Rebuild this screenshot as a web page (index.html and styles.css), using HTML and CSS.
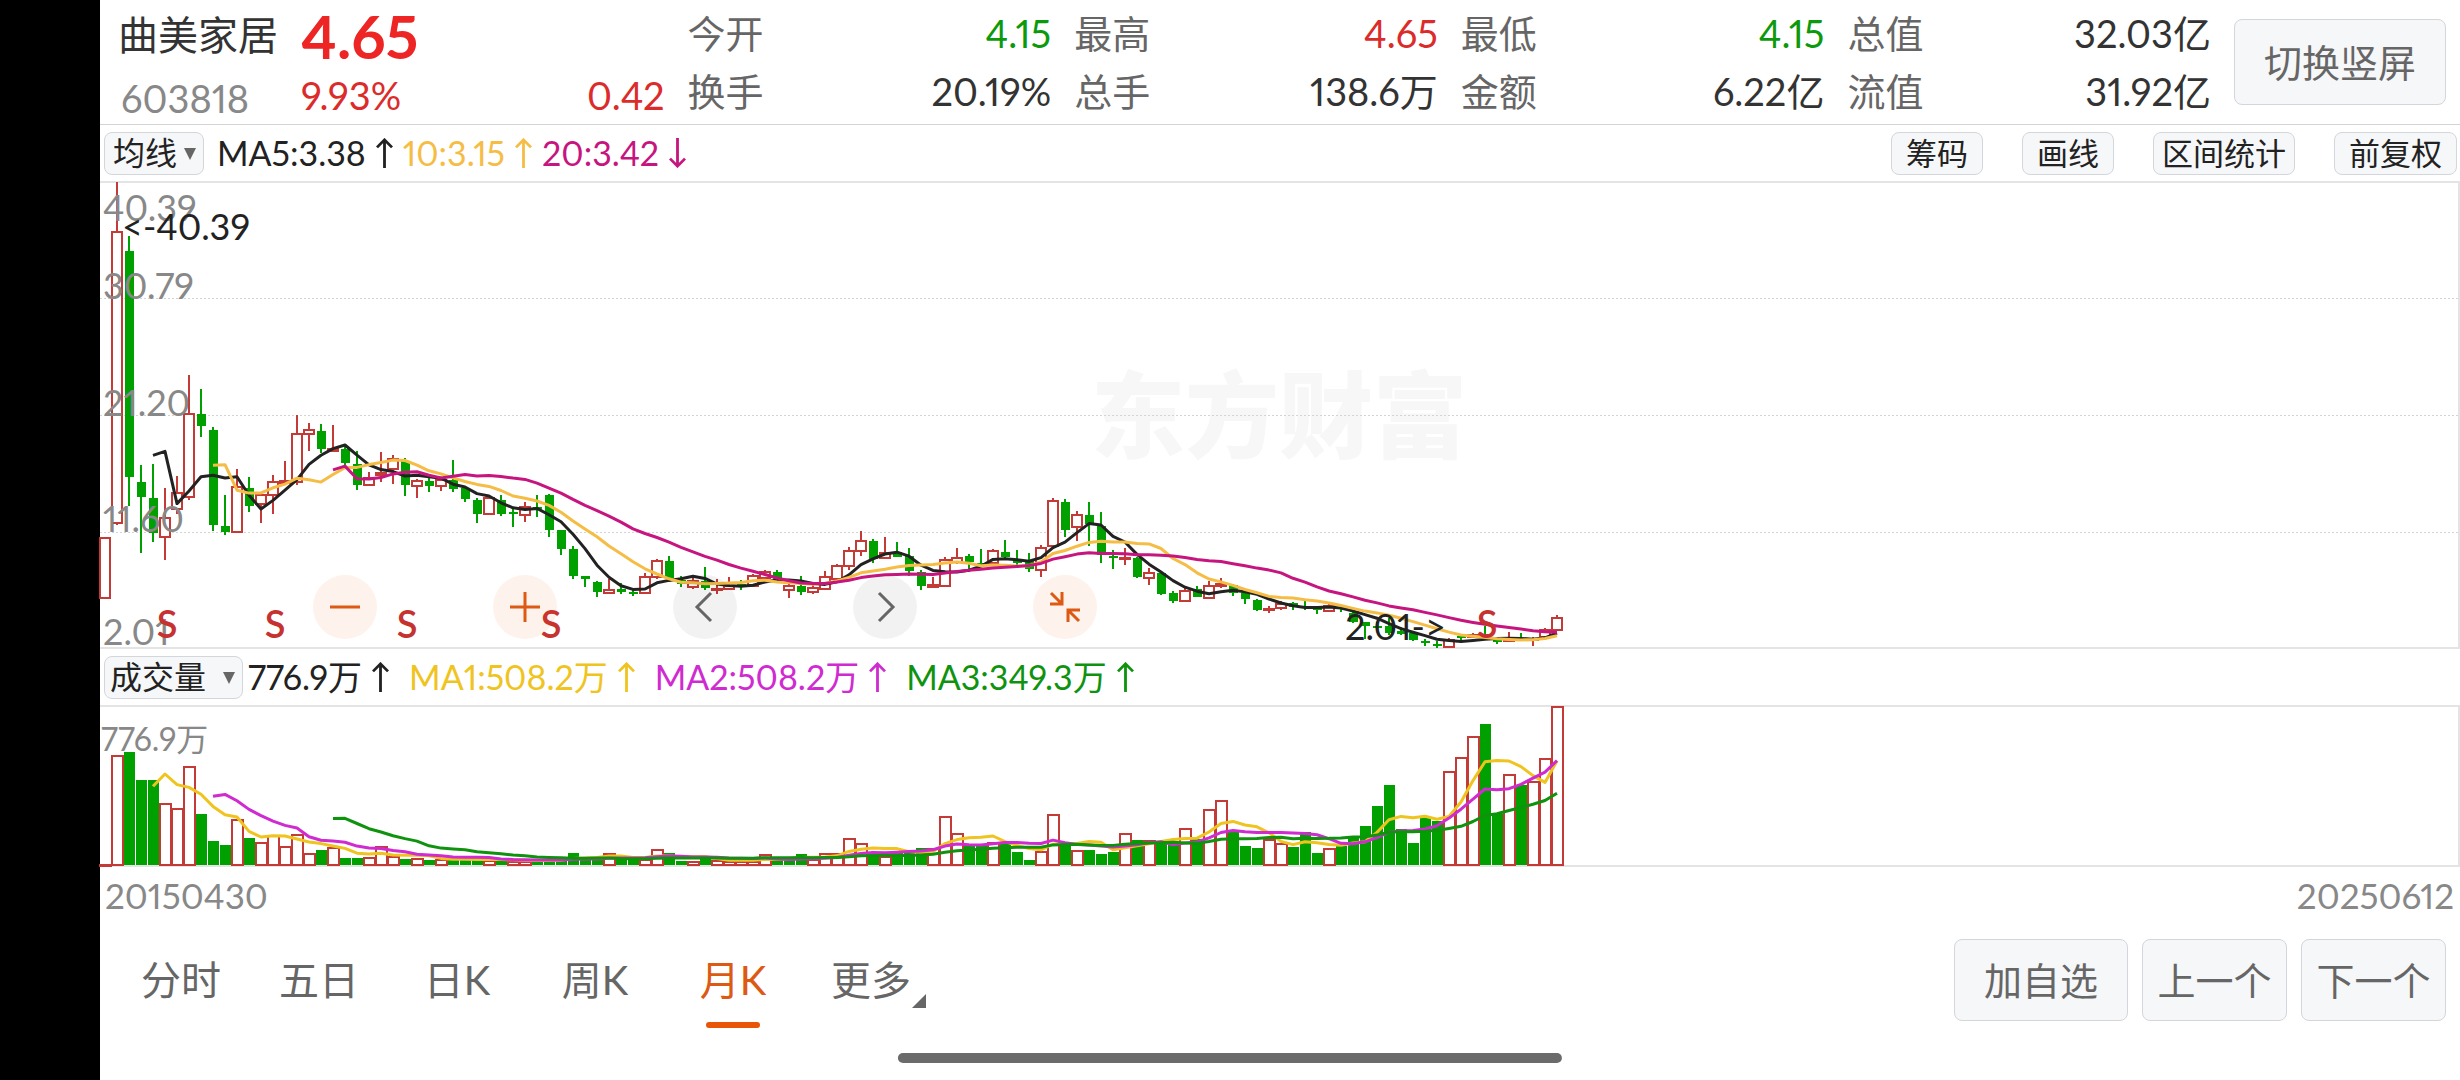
FILE: index.html
```html
<!DOCTYPE html>
<html lang="zh-CN">
<head>
  <meta charset="utf-8">
  <title>曲美家居 603818 月K</title>
  <link rel="stylesheet" href="styles.css">
</head>
<body>
  <svg class="defs" width="0" height="0" aria-hidden="true">
    <symbol id="up" viewBox="0 0 18 32"><path d="M9 32V2M1 10L9 2L17 10" fill="none" stroke="currentColor" stroke-width="3"/></symbol>
    <symbol id="down" viewBox="0 0 18 32"><path d="M9 0V30M1 22L9 30L17 22" fill="none" stroke="currentColor" stroke-width="3"/></symbol>
    <symbol id="caret" viewBox="0 0 12 12"><path d="M0 0H12L6 12Z" fill="#666"/></symbol>
  </svg>

  <div class="app">
    <header class="quote">
      <div class="col stock">
        <h1>曲美家居</h1>
        <span class="code">603818</span>
      </div>
      <div class="col latest">
        <strong class="price">4.65</strong>
        <div class="item up"><span>9.93%</span><span>0.42</span></div>
      </div>
      <div class="col">
        <div class="item"><span class="label">今开</span><span class="down">4.15</span></div>
        <div class="item"><span class="label">换手</span><span>20.19%</span></div>
      </div>
      <div class="col">
        <div class="item"><span class="label">最高</span><span class="up">4.65</span></div>
        <div class="item"><span class="label">总手</span><span>138.6万</span></div>
      </div>
      <div class="col">
        <div class="item"><span class="label">最低</span><span class="down">4.15</span></div>
        <div class="item"><span class="label">金额</span><span>6.22亿</span></div>
      </div>
      <div class="col">
        <div class="item"><span class="label">总值</span><span>32.03亿</span></div>
        <div class="item"><span class="label">流值</span><span>31.92亿</span></div>
      </div>
      <button type="button" class="btn switch">切换竖屏</button>
    </header>

    <div class="bar">
      <div class="picker">
        <select aria-label="主图指标"><option>均线</option></select>
        <svg class="caret"><use href="#caret"/></svg>
      </div>
      <div class="legend">
        <span>MA5:3.38<svg class="arrow"><use href="#up"/></svg></span>
        <span class="c-ma10">10:3.15<svg class="arrow"><use href="#up"/></svg></span>
        <span class="c-ma20">20:3.42<svg class="arrow"><use href="#down"/></svg></span>
      </div>
      <div class="tools">
        <button type="button" class="btn tool">筹码</button>
        <button type="button" class="btn tool">画线</button>
        <button type="button" class="btn tool">区间统计</button>
        <button type="button" class="btn tool wide">前复权</button>
      </div>
    </div>

    <div class="chart price-chart">
      <div class="watermark">东方财富</div>
      <svg id="kline" class="plot"></svg>
      <div class="controls">
        <button type="button" class="round orange" aria-label="缩小"><svg width="32" height="32" viewBox="0 0 32 32"><path d="M1 16H31"/></svg></button>
        <button type="button" class="round orange" aria-label="放大"><svg width="32" height="32" viewBox="0 0 32 32"><path d="M1 16H31M16 1V31"/></svg></button>
        <button type="button" class="round" aria-label="向左"><svg width="32" height="32" viewBox="0 0 32 32"><path d="M22 2L8 16L22 30"/></svg></button>
        <button type="button" class="round" aria-label="向右"><svg width="32" height="32" viewBox="0 0 32 32"><path d="M10 2L24 16L10 30"/></svg></button>
        <button type="button" class="round orange" aria-label="收起"><svg width="32" height="32" viewBox="0 0 32 32"><path d="M2 2L13 13M1 13H13V1M30 30L19 19M31 19H19V31"/></svg></button>
      </div>
    </div>

    <div class="bar">
      <div class="picker volume">
        <select aria-label="副图指标"><option>成交量</option></select>
        <svg class="caret"><use href="#caret"/></svg>
      </div>
      <div class="legend volume">
        <span>776.9万<svg class="arrow"><use href="#up"/></svg></span>
        <span class="c-vol5">MA1:508.2万<svg class="arrow"><use href="#up"/></svg></span>
        <span class="c-vol10">MA2:508.2万<svg class="arrow"><use href="#up"/></svg></span>
        <span class="c-vol20">MA3:349.3万<svg class="arrow"><use href="#up"/></svg></span>
      </div>
    </div>

    <div class="chart volume-chart">
      <svg id="volume" class="plot"></svg>
    </div>

    <div class="dates"><span>20150430</span><span>20250612</span></div>

    <footer class="bottom">
      <nav class="tabs">
        <a href="#">分时</a>
        <a href="#">五日</a>
        <a href="#">日K</a>
        <a href="#">周K</a>
        <a href="#" class="active">月K</a>
        <a href="#" class="more">更多<svg width="14" height="14" viewBox="0 0 14 14"><path d="M14 0V14H0Z" fill="#666"/></svg></a>
      </nav>
      <div class="actions">
        <button type="button" class="btn">加自选</button>
        <button type="button" class="btn">上一个</button>
        <button type="button" class="btn">下一个</button>
      </div>
    </footer>
  </div>
  <div class="home"></div>

  <script src="chart.js"></script>
</body>
</html>
```
FILE: styles.css
```css
* {
  box-sizing: border-box;
}

body {
  margin: 0;
  min-height: 100vh;
  padding-left: 100px;
  background: #000;
  color: #333;
  font-family: Lato, "Noto Sans CJK SC", sans-serif;
  font-size: 38px;
  font-variant-numeric: proportional-nums;
  line-height: 56px;
}

button, select {
  font-family: inherit;
  color: inherit;
}

.defs {
  position: absolute;
}

.app {
  display: flex;
  flex-direction: column;
  min-height: 100vh;
  background: #fff;
}

.up { color: #dc2b2b; }
.down { color: #0c9a0c; }
.c-ma10 { color: #f5bd45; }
.c-ma20 { color: #c7157f; }
.c-vol5 { color: #efc41f; }
.c-vol10 { color: #cf2bd0; }
.c-vol20 { color: #0f930f; }

.btn {
  padding: 0;
  border: 1px solid #d3d6da;
  border-radius: 8px;
  background: #f6f7f9;
  color: #666;
  font-size: 38px;
  line-height: 40px;
}

/* quote header */
.quote {
  display: grid;
  grid-template-columns: 160px repeat(5, 1fr) 212px;
  column-gap: 23px;
  height: 125px;
  padding: 5px 14px 0 18px;
  border-bottom: 1px solid #d4d4d4;
}

.col {
  display: flex;
  flex-direction: column;
}

.item {
  display: flex;
  justify-content: space-between;
  height: 58px;
}

.label {
  color: #666;
}

.stock h1 {
  margin: 0;
  font-size: 40px;
  font-weight: 400;
  line-height: 60px;
}

.code {
  padding-left: 3px;
  color: #888;
  line-height: 66px;
}

.price {
  color: #ee2525;
  font-size: 60px;
  line-height: 62px;
}

.switch {
  height: 86px;
  margin-top: 14px;
}

/* indicator bars */
.bar {
  display: flex;
  align-items: center;
  height: 56px;
  padding: 0 3px 0 4px;
}

.picker {
  position: relative;
}

.picker select {
  display: block;
  width: 100px;
  height: 43px;
  padding: 0 0 0 8px;
  border: 1px solid #d3d6da;
  border-radius: 8px;
  background: #f6f7f9;
  color: #222;
  font-size: 32px;
  line-height: 40px;
  appearance: none;
}

.picker.volume select {
  width: 139px;
  padding-left: 5px;
}

.caret {
  position: absolute;
  top: 16px;
  right: 8px;
  width: 12px;
  height: 12px;
  pointer-events: none;
}

.legend {
  display: flex;
  gap: 10px;
  padding-left: 13px;
  color: #222;
  font-size: 34px;
}

.legend span {
  display: flex;
  align-items: center;
  gap: 10px;
}

.legend.volume {
  gap: 20px;
  padding-left: 5px;
}

.arrow {
  width: 17px;
  height: 30px;
}

.tools {
  display: flex;
  gap: 39px;
  margin-left: auto;
}

.tool {
  min-width: 92px;
  height: 43px;
  padding: 0 8px;
  color: #222;
  font-size: 31px;
}

.tool.wide {
  min-width: 123px;
}

/* charts */
.chart {
  position: relative;
  border: 2px solid #e4e4e4;
  border-left-width: 0;
}

.price-chart {
  height: 468px;
}

.volume-chart {
  height: 162px;
}

.plot {
  position: relative;
  display: block;
  width: 100%;
  height: 100%;
  overflow: visible;
}

.plot text {
  font-size: 36px;
}

.plot .axis { fill: #888; }
.plot .note { fill: #222; }

.volume-chart .axis {
  font-size: 32px;
}

.plot .mark {
  fill: #c63230;
  font-size: 38px;
  font-weight: 600;
  text-anchor: middle;
}

.grid {
  stroke: #d4d4d4;
  stroke-dasharray: 2 2;
}

.rise {
  fill: #fff;
  stroke: #c43a36;
  stroke-width: 2;
}

.fall {
  fill: #00a000;
  stroke: none;
}

.wick {
  stroke-width: 2;
}

.wick.fall {
  stroke: #00a000;
}

.line {
  fill: none;
  stroke: currentColor;
  stroke-width: 3;
  stroke-linejoin: round;
}

.line.c-ma5 { color: #222; }

.watermark {
  position: absolute;
  inset: 0;
  display: flex;
  align-items: center;
  justify-content: center;
  color: #f7f7f7;
  font-size: 94px;
  font-weight: 900;
}

.controls {
  position: absolute;
  left: 213px;
  bottom: 8px;
  display: flex;
  gap: 116px;
}

.round {
  display: flex;
  align-items: center;
  justify-content: center;
  width: 64px;
  height: 64px;
  padding: 0;
  border: 0;
  border-radius: 50%;
  background: rgba(0, 0, 0, .05);
  color: #666;
}

.round.orange {
  background: rgba(240, 90, 10, .08);
  color: #dc5a14;
}

.round path {
  fill: none;
  stroke: currentColor;
  stroke-width: 3;
}

.dates {
  display: flex;
  justify-content: space-between;
  padding: 0 6px 0 5px;
  color: #888;
  font-size: 35px;
}

/* bottom navigation */
.bottom {
  display: flex;
  align-items: center;
  justify-content: space-between;
  height: 114px;
  padding: 0 14px 0 12px;
}

.tabs {
  display: flex;
}

.tabs a {
  position: relative;
  width: 138px;
  color: #666;
  font-size: 40px;
  text-align: center;
  text-decoration: none;
}

.tabs .active {
  color: #dc5a14;
}

.tabs .active::after {
  content: "";
  position: absolute;
  left: 42px;
  bottom: -20px;
  width: 54px;
  height: 6px;
  border-radius: 3px;
  background: #e85506;
}

.more svg {
  position: absolute;
  right: 14px;
  bottom: 0;
}

.actions {
  display: flex;
  gap: 14px;
}

.actions .btn {
  min-width: 145px;
  height: 82px;
}

.actions .btn:first-child {
  min-width: 174px;
}

.home {
  position: fixed;
  left: 50%;
  bottom: 17px;
  width: 27%;
  height: 10px;
  border-radius: 5px;
  background: #6b6b6b;
  transform: translateX(-50%);
}
```
FILE: chart.js
```js
var NS = "http://www.w3.org/2000/svg";
var STEP = 12, FIRST = 5;

// one row per month: direction, high, body top, body bottom, low
var candles = [
  ["r",355,355,416,416],["r",0,49,341,343],["g",54,69,295,324],["g",283,300,315,371],["g",282,316,351,360],
  ["r",306,335,355,378],["r",294,310,327,332],["r",193,231,315,318],["g",207,232,244,255],["g",245,248,343,349],
  ["g",313,344,350,353],["r",287,304,350,351],["g",295,306,324,330],["r",311,312,322,341],["r",293,299,313,332],
  ["r",279,298,301,301],["r",233,251,300,303],["r",241,247,252,269],["g",242,249,267,271],["r",243,266,269,269],
  ["g",264,267,281,284],["g",269,282,303,308],["r",290,295,303,303],["r",270,290,293,300],["r",273,276,287,302],
  ["g",276,279,303,314],["r",297,298,304,316],["g",296,299,304,310],["r",296,297,304,309],["g",278,298,307,310],
  ["g",305,306,317,320],["g",316,318,332,341],["r",314,315,332,332],["g",313,318,332,334],["g",326,330,332,345],
  ["r",320,324,333,340],["g",313,325,327,335],["g",312,313,348,355],["g",348,348,367,373],["g",364,367,394,397],
  ["g",394,394,397,405],["g",399,400,410,415],["r",397,407,411,411],["g",401,407,410,412],["g",407,410,412,414],
  ["r",391,394,411,411],["r",377,378,395,397],["g",374,379,396,397],["g",394,398,402,405],["r",394,398,405,407],
  ["g",385,399,406,408],["r",397,406,408,412],["r",395,403,407,407],["g",398,402,405,408],["r",392,393,404,405],
  ["r",388,389,396,397],["g",388,390,397,399],["r",402,403,408,416],["g",394,404,410,413],["r",403,405,410,412],
  ["r",389,394,407,407],["r",382,383,397,397],["r",365,368,384,388],["r",349,358,369,374],["g",357,359,377,381],
  ["r",355,370,376,376],["g",360,370,375,375],["g",366,374,389,394],["g",388,390,404,408],["r",395,402,405,405],
  ["r",375,377,404,405],["r",366,375,380,382],["g",372,374,380,390],["g",367,381,384,384],["r",367,368,381,381],
  ["g",358,370,375,378],["g",368,377,381,383],["g",371,379,387,390],["r",363,365,388,395],["r",316,318,364,365],
  ["g",317,320,348,355],["r",329,332,345,359],["g",320,333,342,364],["g",330,344,373,381],["g",368,374,376,387],
  ["r",366,375,377,383],["g",375,376,395,396],["r",386,390,396,403],["g",390,391,412,413],["g",409,411,419,421],
  ["r",405,408,419,419],["g",404,407,415,415],["r",399,403,416,416],["r",396,401,404,406],["g",402,403,411,414],
  ["g",410,411,417,422],["g",417,418,428,429],["r",424,426,428,431],["r",419,421,426,428],["g",420,421,425,428],
  ["g",418,424,426,428],["g",425,426,428,432],["r",422,423,429,429],["g",423,425,427,430],["g",429,431,440,441],
  ["g",440,440,444,457],["g",440,444,446,447],["g",436,444,451,453],["g",445,449,452,453],["g",449,451,458,459],
  ["g",457,459,461,464],["g",459,462,464,466],["r",456,457,465,466],["g",453,454,456,461],["r",451,452,455,456],
  ["g",444,452,455,456],["g",455,458,460,462],["r",450,456,459,459],["g",451,456,457,458],["r",455,456,458,464],
  ["r",446,447,455,456],["r",433,435,448,449]
];

// bar heights, negative for a falling month
var volumes = [
  1,110,-113,-85,-85,62,57,99,-51,-24,-20,46,-27,23,30,19,31,12,-15,18,
  -7,-7,8,19,9,-6,7,-5,6,-5,-6,-6,5,-5,4,4,-5,-5,-6,-12,
  -7,-8,12,-6,-5,6,16,-12,-4,4,-7,5,4,4,4,11,-6,-5,-11,6,
  12,12,27,22,-12,9,-12,-12,-17,17,49,32,-21,-20,23,-21,-13,-5,14,51,
  -22,15,-15,-11,-13,32,-25,25,-23,-23,37,-26,56,65,-34,-19,-17,26,22,-18,
  -33,-12,17,-19,-29,-39,-59,-80,-36,-22,-47,-44,94,108,129,-141,-51,91,-80,84,
  107,159
];

function add(svg, tag, attrs, text) {
  var el = document.createElementNS(NS, tag);
  for (var key in attrs) el.setAttribute(key, attrs[key]);
  if (text) el.textContent = text;
  svg.appendChild(el);
}

function center(i) {
  return FIRST + i * STEP;
}

// moving average over n months
function average(svg, values, n, cls) {
  var points = [];
  for (var i = n - 1; i < values.length; i++) {
    var sum = 0;
    for (var j = i - n + 1; j <= i; j++) sum += values[j];
    points.push(center(i) + "," + (sum / n).toFixed(1));
  }
  add(svg, "polyline", { "class": "line " + cls, points: points.join(" ") });
}

function drawPrice() {
  var svg = document.getElementById("kline");
  [115, 232, 349].forEach(function (y) {
    add(svg, "line", { "class": "grid", x1: 0, x2: "100%", y1: y + 0.5, y2: y + 0.5 });
  });
  candles.forEach(function (c, i) {
    var x = center(i), rise = c[0] == "r", cls = rise ? "rise" : "fall";
    add(svg, "line", { "class": "wick " + cls, x1: x, x2: x, y1: c[1] - 1, y2: c[4] - 1 });
    if (rise) {
      add(svg, "rect", { "class": cls, x: x - 5, y: c[2], width: 10, height: Math.max(c[3] - c[2] - 1, 1) });
    } else {
      add(svg, "rect", { "class": cls, x: x - 4, y: c[2] - 1, width: 9, height: Math.max(c[3] - c[2], 2) });
    }
  });
  var closes = candles.map(function (c) { return c[0] == "r" ? c[2] : c[3] - 1; });
  average(svg, closes, 5, "c-ma5");
  average(svg, closes, 10, "c-ma10");
  average(svg, closes, 20, "c-ma20");

  [["40.39", 38], ["30.79", 116], ["21.20", 233], ["11.60", 349], ["2.01", 462]].forEach(function (t) {
    add(svg, "text", { "class": "axis", x: 3, y: t[1] }, t[0]);
  });
  add(svg, "text", { "class": "note", x: 22, y: 57 }, "<-40.39");
  add(svg, "text", { "class": "note", x: 1245, y: 457 }, "2.01->");
  [67, 175, 307, 451, 1387].forEach(function (x) {
    add(svg, "text", { "class": "mark", x: x, y: 455 }, "S");
  });
}

function drawVolume() {
  var svg = document.getElementById("volume");
  add(svg, "text", { "class": "axis", x: 1, y: 44 }, "776.9万");
  var bottom = 158;
  volumes.forEach(function (v, i) {
    var x = center(i), h = Math.abs(v);
    if (v > 0) {
      add(svg, "rect", { "class": "rise", x: x - 5, y: bottom - h + 1, width: 11, height: Math.max(h - 1, 1) });
    } else {
      add(svg, "rect", { "class": "fall", x: x - 5, y: bottom - h, width: 11, height: h });
    }
  });
  var tops = volumes.map(function (v) { return bottom - Math.abs(v); });
  average(svg, tops, 5, "c-vol5");
  average(svg, tops, 10, "c-vol10");
  average(svg, tops, 20, "c-vol20");
}

drawPrice();
drawVolume();
```
